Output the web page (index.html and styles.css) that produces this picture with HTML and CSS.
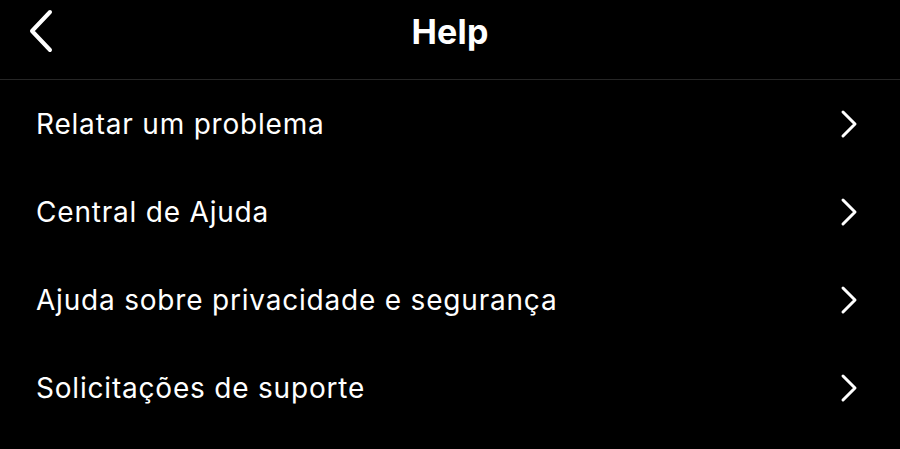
FILE: index.html
```html
<!DOCTYPE html>
<html>
<head>
  <meta charset="UTF-8">
  <link rel="stylesheet" href="styles.css">
</head>
<body>
  <div class="header">
    <button class="back-btn">
      <svg width="28" height="44" viewBox="0 0 28 44"><path d="M23 3 L5 22 L23 41" fill="none" stroke="#fff" stroke-width="4" stroke-linecap="round" stroke-linejoin="round"/></svg>
    </button>
    <div class="header-title">Help</div>
  </div>

  <div class="menu-list">
    <div class="menu-item">
      <span class="menu-text">Relatar um problema</span>
      <svg class="chevron" width="18" height="30" viewBox="0 0 18 30"><path d="M3 3 L15 15 L3 27" fill="none" stroke="#fff" stroke-width="3" stroke-linecap="round" stroke-linejoin="round"/></svg>
    </div>
    <div class="menu-item">
      <span class="menu-text">Central de Ajuda</span>
      <svg class="chevron" width="18" height="30" viewBox="0 0 18 30"><path d="M3 3 L15 15 L3 27" fill="none" stroke="#fff" stroke-width="3" stroke-linecap="round" stroke-linejoin="round"/></svg>
    </div>
    <div class="menu-item">
      <span class="menu-text">Ajuda sobre privacidade e segurança</span>
      <svg class="chevron" width="18" height="30" viewBox="0 0 18 30"><path d="M3 3 L15 15 L3 27" fill="none" stroke="#fff" stroke-width="3" stroke-linecap="round" stroke-linejoin="round"/></svg>
    </div>
    <div class="menu-item">
      <span class="menu-text">Solicitações de suporte</span>
      <svg class="chevron" width="18" height="30" viewBox="0 0 18 30"><path d="M3 3 L15 15 L3 27" fill="none" stroke="#fff" stroke-width="3" stroke-linecap="round" stroke-linejoin="round"/></svg>
    </div>
  </div>
</body>
</html>
```

FILE: styles.css
```css
body {
  margin: 0;
  background: #000;
  color: #fff;
  font-family: Inter, "Noto Sans", sans-serif;
  overflow: hidden;
}

.header {
  position: relative;
  height: 62px;
  padding-bottom: 17px;
  border-bottom: 1px solid #262626;
  display: flex;
  align-items: center;
  justify-content: center;
}

.back-btn {
  position: absolute;
  left: 27px;
  top: 9px;
  background: none;
  border: none;
  padding: 0;
  display: flex;
}

.header-title {
  font-size: 34px;
  font-weight: 700;
  letter-spacing: 0.2px;
}

.menu-item {
  height: 88px;
  padding: 0 42px 0 36px;
  display: flex;
  align-items: center;
  justify-content: space-between;
}

.menu-text {
  font-size: 28px;
  font-weight: 400;
  letter-spacing: 0.8px;
}

.chevron {
  display: block;
}
```
